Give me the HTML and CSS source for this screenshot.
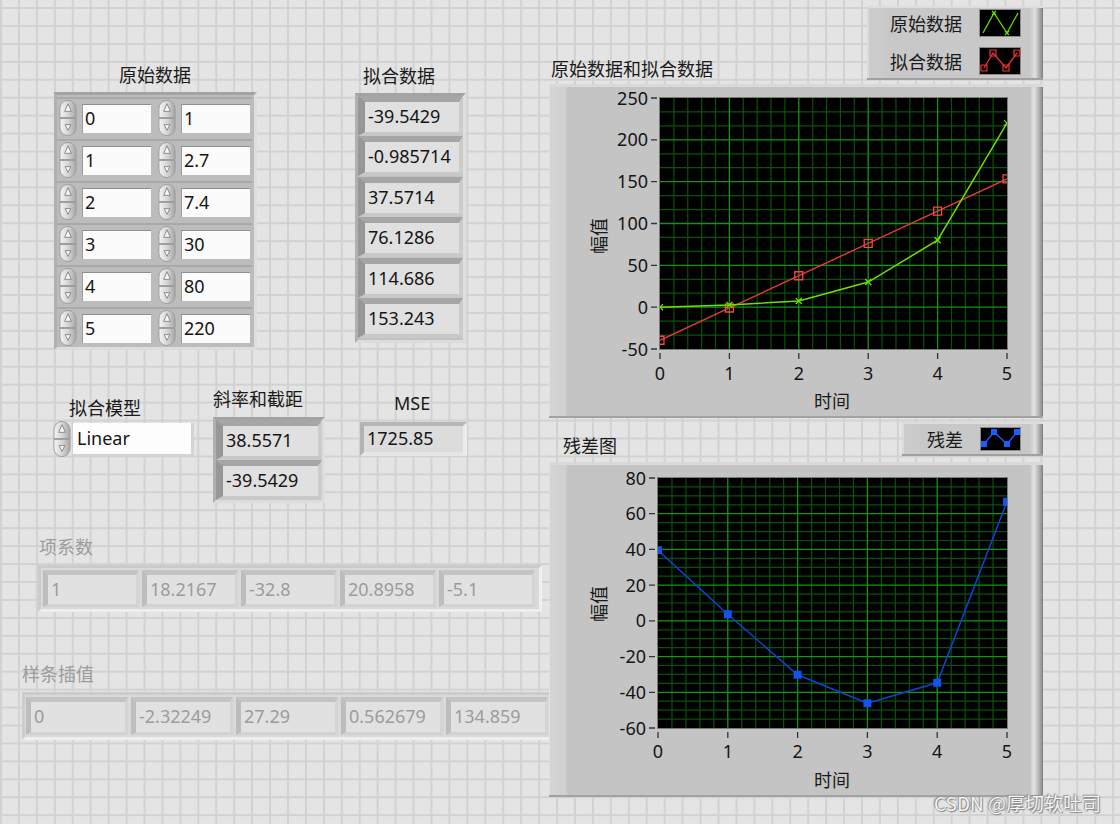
FILE: index.html
```html
<!DOCTYPE html>
<html lang="zh">
<head>
<meta charset="utf-8">
<title>拟合</title>
<link rel="stylesheet" href="styles.css">
</head>
<body>
<svg class="defs" width="0" height="0" aria-hidden="true">
  <defs>
    <linearGradient id="sg" x1="0" x2="1" y1="0" y2="0">
      <stop offset="0" stop-color="#f4f4f4"/>
      <stop offset="0.5" stop-color="#d6d6d6"/>
      <stop offset="1" stop-color="#a6a6a6"/>
    </linearGradient>
    <symbol id="spin" viewBox="0 0 20 40">
      <path d="M1.5 19.5V10A8.5 8.5 0 0 1 18.5 10V19.5Z" fill="url(#sg)" stroke="#9c9c9c"/>
      <path d="M1.5 20.5H18.5V30A8.5 8.5 0 0 1 1.5 30Z" fill="url(#sg)" stroke="#9c9c9c"/>
      <path d="M10 5L13.5 13H6.5Z" fill="#f6f6f6" stroke="#7c7c7c" stroke-width="0.9"/>
      <path d="M7 27H13L10 33Z" fill="#f6f6f6" stroke="#7c7c7c" stroke-width="0.9"/>
    </symbol>
  </defs>
</svg>

<div class="panel">
  <div class="lbl lbl-raw">原始数据</div>
  <div class="arr arr-raw">
    <div class="nc"><svg class="spin"><use href="#spin"/></svg><div class="nbox">0</div></div>
    <div class="nc"><svg class="spin"><use href="#spin"/></svg><div class="nbox">1</div></div>
    <div class="nc"><svg class="spin"><use href="#spin"/></svg><div class="nbox">1</div></div>
    <div class="nc"><svg class="spin"><use href="#spin"/></svg><div class="nbox">2.7</div></div>
    <div class="nc"><svg class="spin"><use href="#spin"/></svg><div class="nbox">2</div></div>
    <div class="nc"><svg class="spin"><use href="#spin"/></svg><div class="nbox">7.4</div></div>
    <div class="nc"><svg class="spin"><use href="#spin"/></svg><div class="nbox">3</div></div>
    <div class="nc"><svg class="spin"><use href="#spin"/></svg><div class="nbox">30</div></div>
    <div class="nc"><svg class="spin"><use href="#spin"/></svg><div class="nbox">4</div></div>
    <div class="nc"><svg class="spin"><use href="#spin"/></svg><div class="nbox">80</div></div>
    <div class="nc"><svg class="spin"><use href="#spin"/></svg><div class="nbox">5</div></div>
    <div class="nc"><svg class="spin"><use href="#spin"/></svg><div class="nbox">220</div></div>
  </div>

  <div class="lbl lbl-fit">拟合数据</div>
  <div class="arr arr-fit">
    <div class="icell">-39.5429</div>
    <div class="icell">-0.985714</div>
    <div class="icell">37.5714</div>
    <div class="icell">76.1286</div>
    <div class="icell">114.686</div>
    <div class="icell">153.243</div>
  </div>

  <div class="lbl lbl-model">拟合模型</div>
  <div class="ring">
    <svg class="spin"><use href="#spin"/></svg>
    <div class="ringbox">Linear</div>
  </div>

  <div class="lbl lbl-slope">斜率和截距</div>
  <div class="arr arr-slope">
    <div class="icell">38.5571</div>
    <div class="icell">-39.5429</div>
  </div>

  <div class="lbl lbl-mse">MSE</div>
  <div class="mse">1725.85</div>

  <div class="lbl dis lbl-coef">项系数</div>
  <div class="darr darr-coef">
    <div class="dcell">1</div>
    <div class="dcell">18.2167</div>
    <div class="dcell">-32.8</div>
    <div class="dcell">20.8958</div>
    <div class="dcell">-5.1</div>
  </div>

  <div class="lbl dis lbl-spline">样条插值</div>
  <div class="darr darr-spline">
    <div class="dcell">0</div>
    <div class="dcell">-2.32249</div>
    <div class="dcell">27.29</div>
    <div class="dcell">0.562679</div>
    <div class="dcell">134.859</div>
  </div>

  <div class="legend legend-top">
    <div class="lg-row">
      <span class="lg-name">原始数据</span>
      <svg class="lg-icon" viewBox="0 0 42 28">
        <rect x="0.5" y="0.5" width="41" height="27" fill="#000" stroke="#8a8a8a"/>
        <polyline points="4,24 15,4 28,24 39,4" fill="none" stroke="#66dd00" stroke-width="1.3"/>
        <path d="M13 2l4 4m0-4l-4 4M26 22l4 4m0-4l-4 4" stroke="#66dd00" stroke-width="1.2"/>
      </svg>
    </div>
    <div class="lg-row">
      <span class="lg-name">拟合数据</span>
      <svg class="lg-icon" viewBox="0 0 42 28">
        <rect x="0.5" y="0.5" width="41" height="27" fill="#000" stroke="#8a8a8a"/>
        <polyline points="5,21 14,6 27,21 38,6" fill="none" stroke="#ee3333" stroke-width="1.3"/>
        <path d="M2 18h6v6h-6zM11 3h6v6h-6zM24 18h6v6h-6zM35 3h6v6h-6z" fill="none" stroke="#ee3333" stroke-width="1.2"/>
      </svg>
    </div>
  </div>

  <div class="lbl lbl-chart1">原始数据和拟合数据</div>
  <div class="chart chart-top">
    <svg class="plot" width="494" height="334" viewBox="0 0 494 334">
      <defs><clipPath id="c1"><rect x="111" y="14" width="347" height="251"/></clipPath></defs>
      <rect x="111" y="14" width="347" height="251" fill="#000"/>
      <path class="gmin" d="M124.88 14V265M138.76 14V265M152.64 14V265M166.52 14V265M194.28 14V265M208.16 14V265M222.04 14V265M235.92 14V265M263.68 14V265M277.56 14V265M291.44 14V265M305.32 14V265M333.08 14V265M346.96 14V265M360.84 14V265M374.72 14V265M402.48 14V265M416.36 14V265M430.24 14V265M444.12 14V265M111 27.94H458M111 41.89H458M111 69.78H458M111 83.72H458M111 111.61H458M111 125.56H458M111 153.44H458M111 167.39H458M111 195.28H458M111 209.22H458M111 237.11H458M111 251.06H458"/>
      <path class="gmaj" d="M180.4 14V265M249.8 14V265M319.2 14V265M388.6 14V265M111 55.83H458M111 97.67H458M111 139.5H458M111 181.33H458M111 223.17H458"/>
      <g clip-path="url(#c1)">
        <polyline points="111,256.25 180.4,223.99 249.8,191.73 319.2,159.47 388.6,127.21 458,94.95" fill="none" stroke="#e83a3a" stroke-width="1.4"/>
        <path d="M107 252.25h8v8h-8zM176.4 219.99h8v8h-8zM245.8 187.73h8v8h-8zM315.2 155.47h8v8h-8zM384.6 123.21h8v8h-8zM454 90.95h8v8h-8z" fill="none" stroke="#ff4444" stroke-width="1.3"/>
        <polyline points="111,223.17 180.4,220.91 249.8,216.98 319.2,198.07 388.6,156.23 458,39.1" fill="none" stroke="#6ee000" stroke-width="1.5"/>
        <path d="M108 220.17l6 6m0-6l-6 6M177.4 217.91l6 6m0-6l-6 6M246.8 213.98l6 6m0-6l-6 6M316.2 195.07l6 6m0-6l-6 6M385.6 153.23l6 6m0-6l-6 6M455 36.1l6 6m0-6l-6 6" stroke="#6ee000" stroke-width="1.3"/>
      </g>
      <rect x="110.5" y="13.5" width="348" height="252" fill="none" stroke="#7a7a7a"/>
      <path class="tick" d="M102 14H108M102 55.83H108M102 97.67H108M102 139.5H108M102 181.33H108M102 223.17H108M102 265H108M111 269V275M180.4 269V275M249.8 269V275M319.2 269V275M388.6 269V275M458 269V275"/>
      <g class="ylab">
        <text x="99" y="20.5">250</text>
        <text x="99" y="62.3">200</text>
        <text x="99" y="104.2">150</text>
        <text x="99" y="146">100</text>
        <text x="99" y="187.8">50</text>
        <text x="99" y="229.7">0</text>
        <text x="99" y="271.5">-50</text>
      </g>
      <g class="xlab">
        <text x="111" y="296">0</text>
        <text x="180.4" y="296">1</text>
        <text x="249.8" y="296">2</text>
        <text x="319.2" y="296">3</text>
        <text x="388.6" y="296">4</text>
        <text x="458" y="296">5</text>
      </g>
      <text class="axt" x="283" y="324">时间</text>
      <text class="axt" transform="translate(49 152) rotate(-90)" dominant-baseline="central">幅值</text>
    </svg>
  </div>

  <div class="lbl lbl-chart2">残差图</div>
  <div class="legend legend-res">
    <span class="lg-name">残差</span>
    <svg class="lg-icon2" viewBox="0 0 41 24">
      <rect x="0.5" y="0.5" width="40" height="23" fill="#000" stroke="#8a8a8a"/>
      <polyline points="4,17 14,5 27,17 37,5" fill="none" stroke="#1a5cff" stroke-width="1.4"/>
      <path d="M1 14h6v6h-6zM11 2h6v6h-6zM24 14h6v6h-6zM34 2h6v6h-6z" fill="#1a5cff"/>
    </svg>
  </div>
  <div class="chart chart-res">
    <svg class="plot" width="494" height="335" viewBox="0 0 494 335">
      <defs><clipPath id="c2"><rect x="109" y="16" width="349" height="250"/></clipPath></defs>
      <rect x="109" y="16" width="349" height="250" fill="#000"/>
      <path class="gmin" d="M122.96 16V266M136.92 16V266M150.88 16V266M164.84 16V266M192.76 16V266M206.72 16V266M220.68 16V266M234.64 16V266M262.56 16V266M276.52 16V266M290.48 16V266M304.44 16V266M332.36 16V266M346.32 16V266M360.28 16V266M374.24 16V266M402.16 16V266M416.12 16V266M430.08 16V266M444.04 16V266M109 24.93H458M109 33.86H458M109 42.79H458M109 60.64H458M109 69.57H458M109 78.5H458M109 96.36H458M109 105.29H458M109 114.21H458M109 132.07H458M109 141H458M109 149.93H458M109 167.79H458M109 176.71H458M109 185.64H458M109 203.5H458M109 212.43H458M109 221.36H458M109 239.21H458M109 248.14H458M109 257.07H458"/>
      <path class="gmaj" d="M178.8 16V266M248.6 16V266M318.4 16V266M388.2 16V266M109 51.71H458M109 87.43H458M109 123.14H458M109 158.86H458M109 194.57H458M109 230.29H458"/>
      <g clip-path="url(#c2)">
        <polyline points="109,88.24 178.8,152.28 248.6,212.73 318.4,241.23 388.2,220.8 458,39.65" fill="none" stroke="#0c46d8" stroke-width="1.5"/>
        <path d="M105 84.24h8v8h-8zM174.8 148.28h8v8h-8zM244.6 208.73h8v8h-8zM314.4 237.23h8v8h-8zM384.2 216.8h8v8h-8zM454 35.65h8v8h-8z" fill="#1452f0"/>
      </g>
      <rect x="108.5" y="15.5" width="350" height="251" fill="none" stroke="#7a7a7a"/>
      <path class="tick" d="M100 16H106M100 51.71H106M100 87.43H106M100 123.14H106M100 158.86H106M100 194.57H106M100 230.29H106M100 266H106M109 270V276M178.8 270V276M248.6 270V276M318.4 270V276M388.2 270V276M458 270V276"/>
      <g class="ylab">
        <text x="97" y="22.5">80</text>
        <text x="97" y="58.2">60</text>
        <text x="97" y="93.9">40</text>
        <text x="97" y="129.6">20</text>
        <text x="97" y="165.4">0</text>
        <text x="97" y="201.1">-20</text>
        <text x="97" y="236.8">-40</text>
        <text x="97" y="272.5">-60</text>
      </g>
      <g class="xlab">
        <text x="109" y="296">0</text>
        <text x="178.8" y="296">1</text>
        <text x="248.6" y="296">2</text>
        <text x="318.4" y="296">3</text>
        <text x="388.2" y="296">4</text>
        <text x="458" y="296">5</text>
      </g>
      <text class="axt" x="283" y="325">时间</text>
      <text class="axt" transform="translate(49 142) rotate(-90)" dominant-baseline="central">幅值</text>
    </svg>
  </div>

  <div class="watermark">CSDN @厚切软吐司</div>
</div>
</body>
</html>
```

FILE: styles.css
```css
html, body {
  margin: 0;
  padding: 0;
  width: 1120px;
  height: 824px;
  overflow: hidden;
}

.defs {
  position: absolute;
  width: 0;
  height: 0;
}

.panel {
  position: relative;
  width: 1120px;
  height: 824px;
  background-color: #e4e4e4;
  background-image:
    linear-gradient(to right, #d2d2d2 2px, transparent 2px),
    linear-gradient(to bottom, #d2d2d2 2px, transparent 2px);
  background-size: 17.95px 17.95px;
  background-position: 0 7px;
  font-family: "Noto Sans", "Noto Sans CJK SC", sans-serif;
  color: #151515;
  overflow: hidden;
}

/* labels */
.lbl {
  position: absolute;
  font-family: "Noto Sans CJK SC", sans-serif;
  font-size: 18px;
  line-height: 20px;
  white-space: nowrap;
  color: #1a1a1a;
}
.lbl.dis { color: #9c9c9c; }
.lbl-raw { left: 119px; top: 64px; }
.lbl-fit { left: 363px; top: 65px; }
.lbl-chart1 { left: 551px; top: 58px; }
.lbl-model { left: 69px; top: 397px; }
.lbl-slope { left: 213px; top: 388px; }
.lbl-mse { left: 394px; top: 393px; font-family: "Noto Sans", sans-serif; }
.lbl-coef { left: 39px; top: 536px; }
.lbl-spline { left: 22px; top: 663px; }
.lbl-chart2 { left: 563px; top: 435px; }

/* array frames */
.arr {
  position: absolute;
  box-sizing: border-box;
  border: 3px solid;
  border-color: #a3a3a3 #dedede #dcdcdc #b0b0b0;
  background: #bcbcbc;
}

.arr-raw {
  left: 54px;
  top: 92px;
  width: 203px;
  height: 258px;
  padding-top: 2px;
  display: grid;
  grid-template-columns: 99px 96px;
  grid-auto-rows: 42px;
}

.nc {
  display: flex;
  align-items: center;
  gap: 4px;
  padding-left: 1px;
  box-shadow: inset 0 2px 0 #a9a9a9;
}

.spin {
  width: 20px;
  height: 38px;
  flex: none;
}

.nbox {
  box-sizing: border-box;
  width: 69px;
  height: 29px;
  background: #fbfbfb;
  border-top: 1px solid #8f8f8f;
  border-left: 1px solid #9c9c9c;
  padding-left: 2px;
  font-size: 18px;
  line-height: 27px;
  white-space: nowrap;
}

.arr-fit {
  left: 355px;
  top: 93px;
  width: 111px;
  height: 250px;
  display: grid;
  grid-auto-rows: 40.4px;
  background: #c2c2c2;
}

.arr-slope {
  left: 213px;
  top: 417px;
  width: 112px;
  height: 86px;
  display: grid;
  grid-auto-rows: 40px;
  background: #c2c2c2;
}

.icell {
  box-sizing: border-box;
  height: 40px;
  border-style: solid;
  border-width: 6px 4px 4px 7px;
  border-color: #a6a6a6 #cccccc #c8c8c8 #979797;
  background: #e0e0e0;
  padding-left: 3px;
  font-size: 18px;
  line-height: 29px;
  white-space: nowrap;
  overflow: hidden;
}

.mse {
  position: absolute;
  left: 360px;
  top: 422px;
  width: 107px;
  height: 34px;
  box-sizing: border-box;
  border-style: solid;
  border-width: 4px 4px 4px 4px;
  border-color: #b6b6b6 #ececec #e6e6e6 #b2b2b2;
  background: #dcdcdc;
  padding-left: 3px;
  font-size: 18px;
  line-height: 25px;
}

/* ring */
.ring {
  position: absolute;
  left: 52px;
  top: 420px;
  display: flex;
  align-items: center;
  gap: 1px;
}
.ringbox {
  box-sizing: border-box;
  width: 121px;
  height: 33px;
  background: #fdfdfd;
  border-right: 3px solid #d4d4d4;
  border-bottom: 2px solid #d4d4d4;
  padding-left: 4px;
  font-size: 18px;
  line-height: 31px;
}

/* disabled arrays */
.darr {
  position: absolute;
  box-sizing: border-box;
  border: 3px solid;
  border-color: #cbcbcb #f0f0f0 #eeeeee #cdcdcd;
  background: #d9d9d9;
  display: flex;
  gap: 3px;
}
.darr-coef {
  left: 38px;
  top: 565px;
  width: 504px;
  height: 47px;
  padding: 2px;
}
.darr-coef .dcell { width: 96px; height: 37px; }
.darr-spline {
  left: 22px;
  top: 692px;
  width: 530px;
  height: 48px;
  padding: 2px 1px;
}
.darr-spline .dcell { width: 102px; height: 38px; }

.dcell {
  box-sizing: border-box;
  flex: none;
  border-style: solid;
  border-width: 5px 3px 3px 5px;
  border-color: #c4c4c4 #d4d4d4 #d2d2d2 #bdbdbd;
  background: #e1e1e1;
  color: #9c9c9c;
  padding-left: 3px;
  font-size: 18px;
  line-height: 28px;
  white-space: nowrap;
}

/* legends */
.legend {
  position: absolute;
  box-sizing: border-box;
  background: linear-gradient(to right, #cbcbcb 0, #cbcbcb 17px, #c8c8c8 18px, #c8c8c8 calc(100% - 13px), #e2e2e2 calc(100% - 8px), #9a9a9a calc(100% - 2px), #7e7e7e 100%);
  box-shadow: inset 0 2px 0 #dddddd, inset 0 -2px 0 #a0a0a0, inset 2px 0 0 #dadada;
  font-family: "Noto Sans CJK SC", sans-serif;
  font-size: 18px;
  color: #1a1a1a;
}
.legend-top {
  left: 867px;
  top: 6px;
  width: 176px;
  height: 74px;
  padding: 3px 22px 0 23px;
  display: flex;
  flex-direction: column;
  gap: 10px;
}
.lg-row {
  display: flex;
  align-items: center;
  gap: 17px;
  height: 28px;
}
.lg-name {
  width: 72px;
  white-space: nowrap;
  line-height: 20px;
}
.lg-icon {
  width: 42px;
  height: 28px;
  flex: none;
}
.legend-res {
  left: 902px;
  top: 422px;
  width: 141px;
  height: 34px;
  padding-left: 25px;
  display: flex;
  align-items: center;
  gap: 17px;
}
.legend-res .lg-name { width: 36px; }
.lg-icon2 {
  width: 41px;
  height: 24px;
  flex: none;
}

/* charts */
.chart {
  position: absolute;
  left: 549px;
  width: 494px;
  background:
    linear-gradient(to bottom, #d9d9d9 0, #d9d9d9 3px, transparent 3px),
    linear-gradient(to right, #d4d4d4 0, #d0d0d0 17px, #c4c4c4 18px, #c4c4c4 calc(100% - 13px), #e4e4e4 calc(100% - 9px), #a8a8a8 calc(100% - 3px), #7e7e7e 100%);
  box-shadow: inset 0 -2px 0 #a2a2a2, inset 1px 0 0 #e2e2e2;
}
.chart-top { top: 84px; height: 334px; }
.chart-res { top: 462px; height: 335px; }

.plot {
  display: block;
}
.gmin {
  fill: none;
  stroke: #095209;
  stroke-width: 1.2;
}
.gmaj {
  fill: none;
  stroke: #139413;
  stroke-width: 1.3;
}
.tick {
  fill: none;
  stroke: #333;
  stroke-width: 1.3;
}
.ylab text {
  font-family: "Noto Sans", sans-serif;
  font-size: 18px;
  fill: #151515;
  text-anchor: end;
}
.xlab text {
  font-family: "Noto Sans", sans-serif;
  font-size: 18px;
  fill: #151515;
  text-anchor: middle;
}
.axt {
  font-family: "Noto Sans CJK SC", sans-serif;
  font-size: 18px;
  fill: #1a1a1a;
  text-anchor: middle;
}

.watermark {
  position: absolute;
  left: 934px;
  top: 790px;
  font-family: "Noto Sans CJK SC", sans-serif;
  font-size: 19px;
  line-height: 26px;
  color: #f6f6f6;
  white-space: nowrap;
  text-shadow: 0 0 1px #6a6a6a, 1px 1px 1px #8a8a8a, -1px -1px 1px #9a9a9a;
}
```
